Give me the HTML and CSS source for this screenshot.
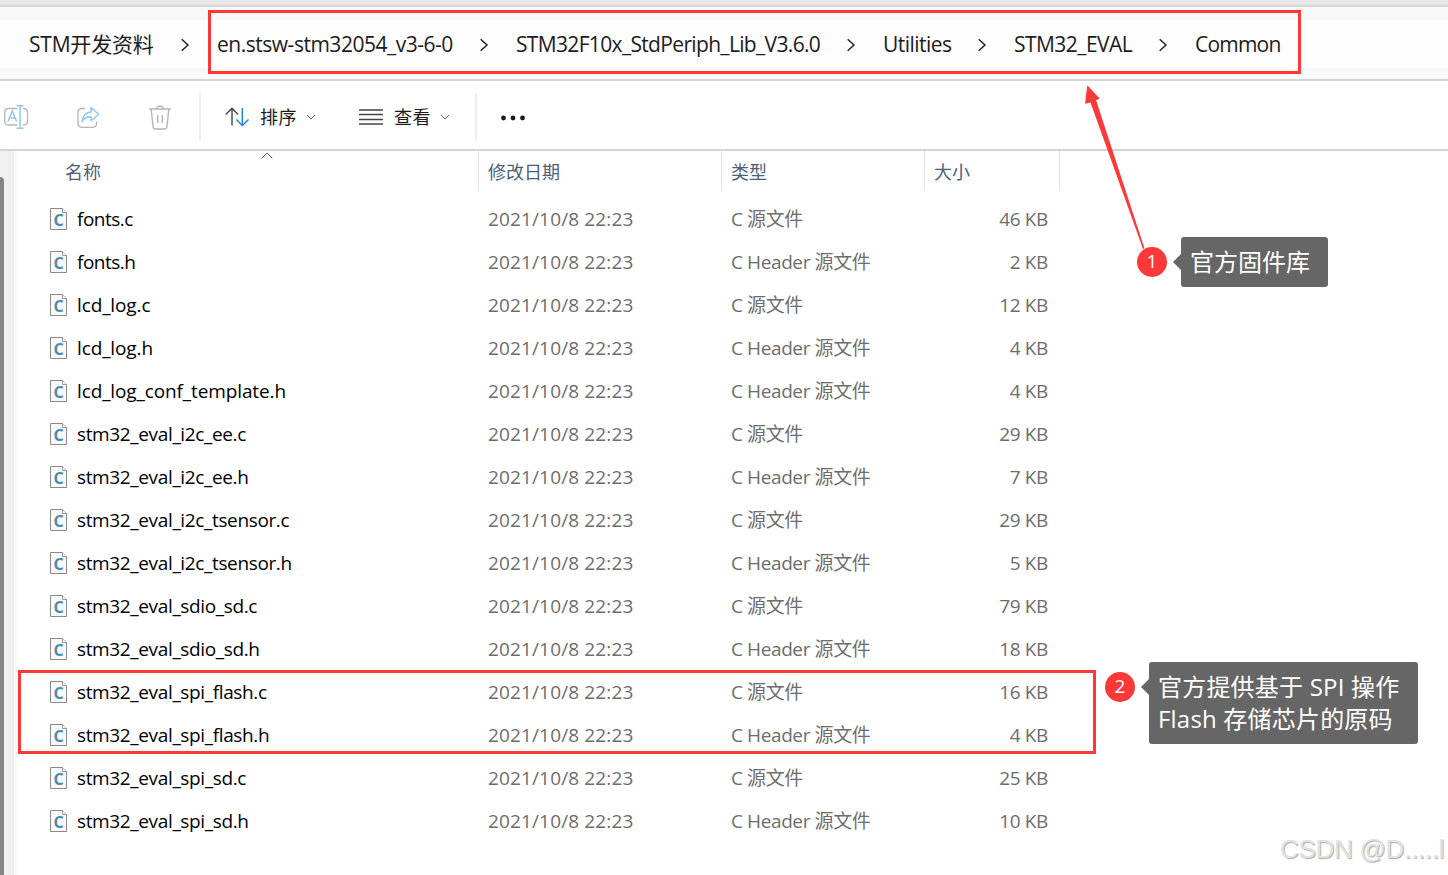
FILE: index.html
```html
<!DOCTYPE html>
<html lang="zh-CN">
<head>
<meta charset="utf-8">
<title>Common</title>
<link rel="stylesheet" href="styles.css">
</head>
<body>
<svg class="defs" width="0" height="0">
  <symbol id="chev" viewBox="0 0 12 14"><path d="M2.700 1.200 9 7 2.700 12.800" fill="none" stroke="#222" stroke-width="1.500"/></symbol>
  <symbol id="down" viewBox="0 0 10 6"><path d="M1 1 5 5 9 1" fill="none" stroke="#666" stroke-width="1"/></symbol>
  <symbol id="file" viewBox="0 0 17 22">
    <path d="M.5.5H12.500L16.500 4.500V21.500H.5Z" fill="#f8f8f8" stroke="#8a8a8a"/>
    <path d="M12.500.5V4.500H16.500" fill="#fff" stroke="#999"/>
  </symbol>
</svg>
<div class="window">
  <div class="tabstrip"></div>
  <nav class="address">
    <div class="crumbs">
      <span class="crumb c1">STM开发资料</span><svg class="chev"><use href="#chev"/></svg>
      <span class="crumb c2">en.stsw-stm32054_v3-6-0</span><svg class="chev"><use href="#chev"/></svg>
      <span class="crumb c3">STM32F10x_StdPeriph_Lib_V3.6.0</span><svg class="chev"><use href="#chev"/></svg>
      <span class="crumb c4">Utilities</span><svg class="chev"><use href="#chev"/></svg>
      <span class="crumb c5">STM32_EVAL</span><svg class="chev"><use href="#chev"/></svg>
      <span class="crumb c6">Common</span>
    </div>
  </nav>
  <div class="toolbar">
    <svg class="tool rename" viewBox="0 0 26 26" fill="none" stroke-width="1.300">
      <path d="M14.500 4.500H5.500Q1.700 4.500 1.700 8.500V17Q1.700 21 5.500 21H14.500M20 4.500Q24.500 4.500 24.500 8.500V17Q24.500 21 20 21" stroke="#b5b5b5"/>
      <path d="M5 17.500 9.300 7 13.600 17.500M6.500 14H12.100M13.500 1.700H20.500M17 1.700V24.300M13.500 24.300H20.500" stroke="#8fc8f2" stroke-width="1.500"/>
    </svg>
    <svg class="tool share" viewBox="0 0 24 26" fill="none" stroke-width="1.300">
      <path d="M9 4.500H6Q2 4.500 2 8.500V19.500Q2 23.300 6 23.300H16.500Q20.500 23.300 20.500 19.500V17.500" stroke="#b5b5b5"/>
      <path d="M15 3.500 22.700 10.200 15 16.700V12.700Q9 12.500 6 17.700 7 8.500 15 8Z" stroke="#8fc8f2" stroke-width="1.500" stroke-linejoin="round"/>
    </svg>
    <svg class="tool trash" viewBox="0 0 24 26" fill="none" stroke="#b5b5b5" stroke-width="1.400">
      <path d="M1 5H23M3.200 5 5 22.500Q5.300 25 7.500 25H16.500Q18.700 25 19 22.500L20.800 5M8.500 5Q9 2 12 2T15.500 5M9.700 11V19M14.300 11V19"/>
    </svg>
    <i class="sep sep1"></i>
    <svg class="sort" viewBox="0 0 24 20" fill="none" stroke-width="1.400">
      <path d="M7 18.500V1.500M.7 7.500 7 1.300 13 7.500" stroke="#444"/>
      <path d="M17.300 1V18.500M11.300 12.500 17.300 18.500 23.500 12.500" stroke="#1a84dc"/>
    </svg>
    <span class="cmd">排序</span><svg class="down"><use href="#down"/></svg>
    <svg class="lines" viewBox="0 0 24 18" fill="none" stroke="#444" stroke-width="1.300"><path d="M0 2H24M0 6.500H24M0 11.500H24M0 16H24"/></svg>
    <span class="cmd">查看</span><svg class="down"><use href="#down"/></svg>
    <i class="sep sep2"></i>
    <svg class="dots" viewBox="0 0 24 6" fill="#1b1b1b"><circle cx="2.500" cy="3" r="2.400"/><circle cx="12" cy="3" r="2.400"/><circle cx="21.500" cy="3" r="2.400"/></svg>
  </div>
  <div class="content">
    <aside class="side"><div class="thumb"></div></aside>
    <main class="files">
      <div class="head"><span class="h-name">名称</span><span>修改日期</span><span>类型</span><span>大小</span></div>
      <div class="rows">
        <div class="row"><span class="ico"><svg><use href="#file"/></svg><b>C</b></span><span class="name fonts">fonts.c</span><span class="date">2021/10/8 22:23</span><span class="type">C 源文件</span><span class="size">46 KB</span></div>
        <div class="row"><span class="ico"><svg><use href="#file"/></svg><b>C</b></span><span class="name fonts">fonts.h</span><span class="date">2021/10/8 22:23</span><span class="type">C Header 源文件</span><span class="size">2 KB</span></div>
        <div class="row"><span class="ico"><svg><use href="#file"/></svg><b>C</b></span><span class="name lcd">lcd_log.c</span><span class="date">2021/10/8 22:23</span><span class="type">C 源文件</span><span class="size">12 KB</span></div>
        <div class="row"><span class="ico"><svg><use href="#file"/></svg><b>C</b></span><span class="name lcd">lcd_log.h</span><span class="date">2021/10/8 22:23</span><span class="type">C Header 源文件</span><span class="size">4 KB</span></div>
        <div class="row"><span class="ico"><svg><use href="#file"/></svg><b>C</b></span><span class="name lcd">lcd_log_conf_template.h</span><span class="date">2021/10/8 22:23</span><span class="type">C Header 源文件</span><span class="size">4 KB</span></div>
        <div class="row"><span class="ico"><svg><use href="#file"/></svg><b>C</b></span><span class="name">stm32_eval_i2c_ee.c</span><span class="date">2021/10/8 22:23</span><span class="type">C 源文件</span><span class="size">29 KB</span></div>
        <div class="row"><span class="ico"><svg><use href="#file"/></svg><b>C</b></span><span class="name">stm32_eval_i2c_ee.h</span><span class="date">2021/10/8 22:23</span><span class="type">C Header 源文件</span><span class="size">7 KB</span></div>
        <div class="row"><span class="ico"><svg><use href="#file"/></svg><b>C</b></span><span class="name">stm32_eval_i2c_tsensor.c</span><span class="date">2021/10/8 22:23</span><span class="type">C 源文件</span><span class="size">29 KB</span></div>
        <div class="row"><span class="ico"><svg><use href="#file"/></svg><b>C</b></span><span class="name">stm32_eval_i2c_tsensor.h</span><span class="date">2021/10/8 22:23</span><span class="type">C Header 源文件</span><span class="size">5 KB</span></div>
        <div class="row"><span class="ico"><svg><use href="#file"/></svg><b>C</b></span><span class="name">stm32_eval_sdio_sd.c</span><span class="date">2021/10/8 22:23</span><span class="type">C 源文件</span><span class="size">79 KB</span></div>
        <div class="row"><span class="ico"><svg><use href="#file"/></svg><b>C</b></span><span class="name">stm32_eval_sdio_sd.h</span><span class="date">2021/10/8 22:23</span><span class="type">C Header 源文件</span><span class="size">18 KB</span></div>
        <div class="row"><span class="ico"><svg><use href="#file"/></svg><b>C</b></span><span class="name">stm32_eval_spi_flash.c</span><span class="date">2021/10/8 22:23</span><span class="type">C 源文件</span><span class="size">16 KB</span></div>
        <div class="row"><span class="ico"><svg><use href="#file"/></svg><b>C</b></span><span class="name">stm32_eval_spi_flash.h</span><span class="date">2021/10/8 22:23</span><span class="type">C Header 源文件</span><span class="size">4 KB</span></div>
        <div class="row"><span class="ico"><svg><use href="#file"/></svg><b>C</b></span><span class="name">stm32_eval_spi_sd.c</span><span class="date">2021/10/8 22:23</span><span class="type">C 源文件</span><span class="size">25 KB</span></div>
        <div class="row"><span class="ico"><svg><use href="#file"/></svg><b>C</b></span><span class="name">stm32_eval_spi_sd.h</span><span class="date">2021/10/8 22:23</span><span class="type">C Header 源文件</span><span class="size">10 KB</span></div>
      </div>
    </main>
  </div>
  <svg class="sort-mark" viewBox="0 0 12 7"><path d="M.7 6.300 6 1 11.300 6.300" fill="none" stroke="#555"/></svg>
  <div class="mark mark-path"></div>
  <div class="mark mark-rows"></div>
  <svg class="arrow" viewBox="0 0 70 170"><path d="M7.300.3 19.800 13.700 16 15 64.500 163.500 63 164 10.500 17.500 5 18.800Z" fill="#fc3838"/></svg>
  <div class="badge badge1">1</div>
  <div class="note note1"><span>官方固件库</span></div>
  <div class="badge badge2">2</div>
  <div class="note note2"><span>官方提供基于 SPI 操作</span><span>Flash 存储芯片的原码</span></div>
  <div class="watermark">CSDN @D.....l</div>
</div>
</body>
</html>
```
FILE: styles.css
```css
* { box-sizing: border-box; }
body { margin: 0; background: #fff; font-family: "Open Sans", "Noto Sans CJK SC", sans-serif; }
svg { display: block; flex: none; }
.defs { position: absolute; }
.window { position: relative; width: 1448px; height: 875px; overflow: hidden; display: flex; flex-direction: column; }

.tabstrip { height: 7px; background: #e7e7e7; border-bottom: 2px solid #d6d6d6; flex: none; }
.address { height: 74px; padding: 13px 0 11px; background: #f8f8f8; border-bottom: 2px solid #d4d4d4; flex: none; }
.crumbs { height: 48px; display: flex; align-items: center; padding: 1px 0 0 29px; background: #fdfdfd; color: #1c1c1c; font-size: 21px; white-space: nowrap; }
.crumb { line-height: 30px; margin-top: -1px; flex: none; }
.c1 { width: 124px; letter-spacing: -.2px; }
.c2 { width: 235px; letter-spacing: -.48px; }
.c3 { width: 303px; letter-spacing: -.66px; }
.c4 { width: 67px; letter-spacing: -.55px; }
.c5 { width: 117px; letter-spacing: -.55px; }
.c6 { letter-spacing: -.8px; }
.chev { width: 12px; height: 14px; margin: 0 26px; }

.toolbar { height: 70px; display: flex; align-items: center; padding-top: 4px; border-bottom: 2px solid #d4d4d4; flex: none; color: #1c1c1c; font-size: 18px; }
.tool { height: 26px; }
.rename { width: 26px; margin-left: 3px; }
.share { width: 24px; margin-left: 47px; }
.trash { width: 24px; margin-left: 48px; }
.sep { width: 2px; height: 48px; background: #eee; }
.sep1 { margin: 0 24px 0 27px; }
.sort { width: 24px; height: 20px; }
.cmd { width: 37px; margin-left: 11px; line-height: 26px; letter-spacing: .5px; white-space: nowrap; }
.down { width: 10px; height: 6px; margin-left: 9px; }
.lines { width: 24px; height: 18px; margin-left: 43px; }
.sep2 { margin: 0 24px 0 25px; }
.dots { width: 24px; height: 6px; margin-top: 2px; }

.content { flex: 1; display: flex; min-height: 0; }
.side { width: 18px; background: #f0f0f0; border-right: 4px solid #fafafa; padding-top: 26px; flex: none; }
.thumb { width: 4px; height: 698px; background: #868482; border-top-right-radius: 4px; }
.files { flex: 1; }
.head { display: grid; grid-template-columns: 461px 243px 203px 135px; height: 40px; }
.head span { padding: 8px 0 0 9px; line-height: 26px; font-size: 18px; color: #4c607a; border-right: 1px solid #e2e2e2; }
.head .h-name { padding-left: 47px; }
.rows { padding-top: 6px; }
.row { display: grid; grid-template-columns: 17px 421px 243px 203px 114px; height: 43px; align-items: center; padding-left: 32px; font-size: 19px; line-height: 26px; color: #6d6d6d; white-space: nowrap; }
.ico { display: grid; width: 17px; height: 22px; }
.ico svg { grid-area: 1 / 1; width: 17px; height: 22px; }
.ico b { grid-area: 1 / 1; padding-top: 2px; text-align: center; font-size: 16px; line-height: 20px; color: #4a8caa; }
.name { padding-left: 10px; color: #000; letter-spacing: -.36px; }
.fonts { letter-spacing: -.5px; }
.lcd { letter-spacing: -.12px; }
.date { letter-spacing: .14px; }
.type { letter-spacing: -.4px; }
.size { text-align: right; letter-spacing: -.35px; }

.sort-mark { position: absolute; left: 261px; top: 152px; width: 12px; height: 7px; }
.mark { position: absolute; border: 3px solid #fc3838; }
.mark-path { left: 208px; top: 10px; width: 1093px; height: 64px; }
.mark-rows { left: 18px; top: 670px; width: 1078px; height: 84px; }
.arrow { position: absolute; left: 1080px; top: 85px; width: 70px; height: 170px; }
.badge { position: absolute; width: 30px; height: 30px; border-radius: 50%; background: #fc3838; color: #fff; font-size: 19px; line-height: 29px; text-align: center; }
.badge1 { left: 1137px; top: 247px; }
.badge2 { left: 1105px; top: 672px; }
.note { position: absolute; display: flex; flex-direction: column; background: #666; color: #fff; border-radius: 3px; font-size: 24px; line-height: 32px; padding: 9px; white-space: nowrap; }
.note::before { content: ""; position: absolute; left: -8px; top: 17px; border: 8px solid transparent; border-left: 0; border-right-color: #666; }
.note1 { left: 1181px; top: 237px; width: 147px; height: 50px; }
.note2 { left: 1149px; top: 662px; width: 269px; height: 82px; letter-spacing: .2px; }
.watermark { position: absolute; left: 1280px; top: 832px; font: 26px/34px "Liberation Sans", sans-serif; letter-spacing: -.3px; color: #e2e2e2; text-shadow: 1px 1px 1px #aaa; white-space: nowrap; }
```
